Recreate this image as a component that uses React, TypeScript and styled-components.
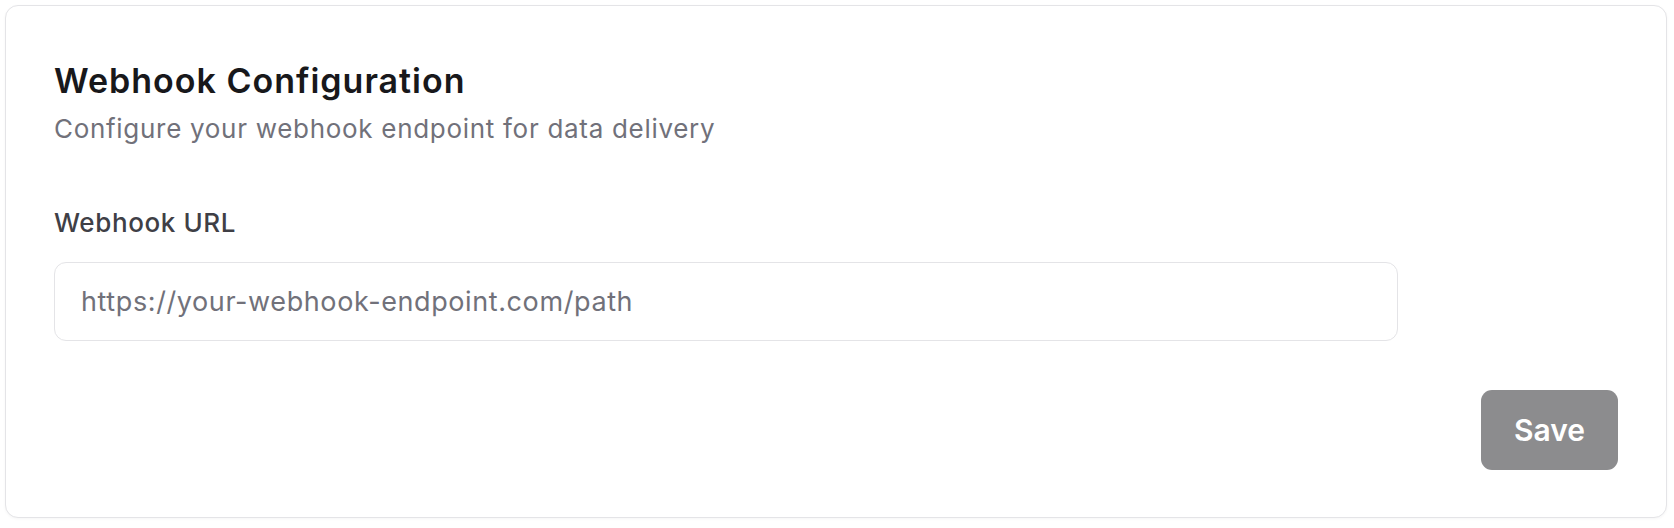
import React from 'react';
import styled, { createGlobalStyle } from 'styled-components';

const GlobalStyle = createGlobalStyle`
  html, body {
    margin: 0;
    padding: 0;
    background: #ffffff;
  }
  body {
    font-family: Inter, "Noto Sans", sans-serif;
    -webkit-font-smoothing: antialiased;
  }
  * {
    box-sizing: border-box;
  }
`;

const Page = styled.div`
  padding: 5px 7px 10px 5px;
`;

const Card = styled.section`
  border: 1.5px solid #e4e4e7;
  border-radius: 13px;
  background: #ffffff;
  box-shadow: 0 1px 3px rgba(0, 0, 0, 0.04);
  padding: 53px 48px 47px 48px;
  display: flex;
  flex-direction: column;
`;

const Title = styled.h2`
  margin: 0;
  font-size: 34px;
  line-height: 44px;
  font-weight: 600;
  color: #18181b;
  letter-spacing: 1px;
`;

const Subtitle = styled.p`
  margin: 8px 0 0;
  font-size: 26px;
  line-height: 36px;
  font-weight: 400;
  color: #71717a;
  letter-spacing: 0.7px;
`;

const Field = styled.div`
  margin-top: 58px;
  display: flex;
  flex-direction: column;
  gap: 21px;
`;

const Label = styled.label`
  font-size: 26px;
  line-height: 36px;
  font-weight: 500;
  color: #3f3f46;
  letter-spacing: 0.6px;
`;

const Input = styled.input`
  width: 100%;
  max-width: 1344px;
  height: 79px;
  padding: 0 26px;
  border: 1.5px solid #e4e4e7;
  border-radius: 12px;
  background: #ffffff;
  font-family: inherit;
  font-size: 27px;
  color: #18181b;
  outline: none;
  letter-spacing: 0.6px;

  &::placeholder {
    color: #71717a;
  }
`;

const Actions = styled.div`
  margin-top: 49px;
  display: flex;
  justify-content: flex-end;
`;

const SaveButton = styled.button`
  height: 80px;
  width: 137px;
  border: none;
  border-radius: 11px;
  background: #8c8c8e;
  color: #ffffff;
  font-family: inherit;
  font-size: 30px;
  font-weight: 600;
  cursor: not-allowed;
`;

export default function App() {
  return (
    <Page>
      <GlobalStyle />
      <Card>
        <Title>Webhook Configuration</Title>
        <Subtitle>Configure your webhook endpoint for data delivery</Subtitle>
        <Field>
          <Label htmlFor="webhook-url">Webhook URL</Label>
          <Input id="webhook-url" type="url" placeholder="https://your-webhook-endpoint.com/path" />
        </Field>
        <Actions>
          <SaveButton disabled>Save</SaveButton>
        </Actions>
      </Card>
    </Page>
  );
}
